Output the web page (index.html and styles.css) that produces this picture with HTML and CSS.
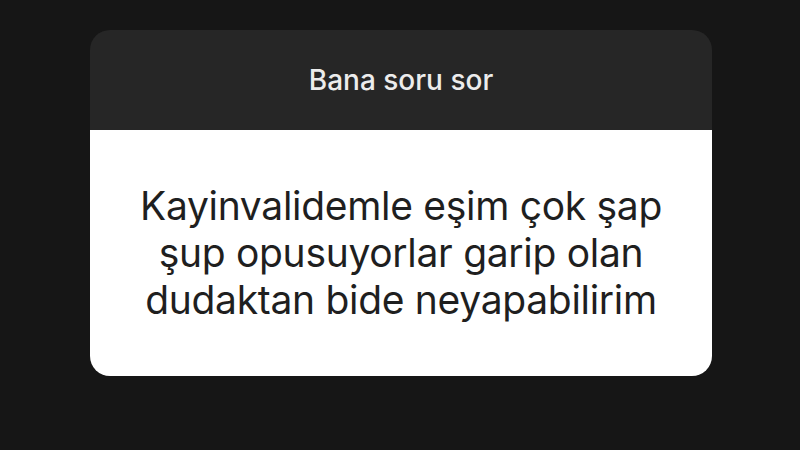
FILE: index.html
```html
<!DOCTYPE html>
<html lang="tr">
<head>
    <meta charset="UTF-8" />
    <title>Bana soru sor</title>
    <link rel="stylesheet" href="styles.css">
</head>
<body>
    <div class="question-card">
        <div class="card-header">Bana soru sor</div>
        <div class="card-body">
            <p class="question-text">Kayinvalidemle eşim çok şap<br>şup opusuyorlar garip olan<br>dudaktan bide neyapabilirim</p>
        </div>
    </div>
</body>
</html>
```

FILE: styles.css
```css
body {
    margin: 0;
    padding: 30px 0 0 90px;
    background-color: #161616;
    font-family: 'Inter', 'Liberation Sans', sans-serif;
    height: 450px;
    box-sizing: border-box;
}

.question-card {
    width: 622px;
    border-radius: 20px;
    overflow: hidden;
}

.card-header {
    height: 100px;
    background-color: #262626;
    color: #ececec;
    font-size: 28px;
    font-weight: 500;
    display: flex;
    align-items: center;
    justify-content: center;
}

.card-body {
    height: 246px;
    background-color: #ffffff;
    display: flex;
    align-items: center;
    justify-content: center;
}

.question-text {
    margin: 0 0 2px;
    text-align: center;
    color: #1f1f1f;
    font-size: 39px;
    line-height: 47px;
    letter-spacing: -0.3px;
}
```
